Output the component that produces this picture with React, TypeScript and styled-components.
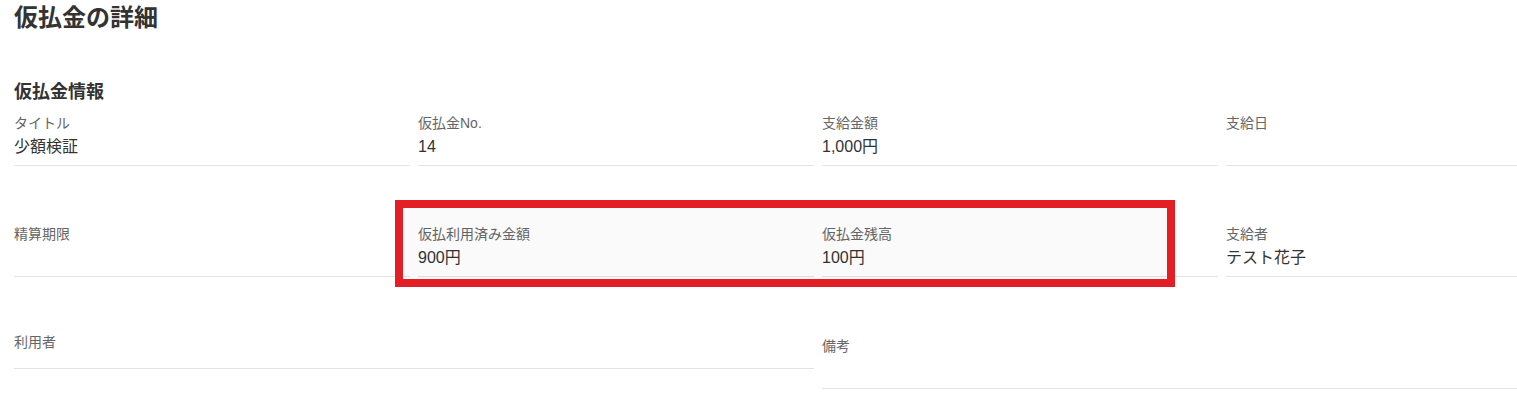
import styled, { createGlobalStyle } from 'styled-components';

const GlobalStyle = createGlobalStyle`
    html, body {
        margin: 0;
        padding: 0;
        background: #ffffff;
        overflow: hidden;
    }

    body {
        font-family: 'Liberation Sans', 'Noto Sans CJK JP', sans-serif;
        color: #333333;
    }
`;

const Page = styled.div`
    padding: 2px 0 0 14px;
`;

const PageTitle = styled.h1`
    margin: 0;
    font-size: 24px;
    line-height: 32px;
    font-weight: 700;
    color: #333333;
`;

const SectionTitle = styled.h2`
    margin: 46px 0 6px;
    font-size: 18px;
    line-height: 24px;
    font-weight: 700;
    color: #333333;
`;

// last column is cut off by the viewport in the screenshot, so let it fill what is left
const FieldGrid = styled.div`
    position: relative;
    display: grid;
    grid-template-columns: repeat(3, 396px) minmax(0, 1fr);
    column-gap: 8px;
    row-gap: 55px;
    align-items: start;
`;

const Field = styled.div<{ $span?: number; $top?: number }>`
    grid-column: span ${({ $span }) => $span ?? 1};
    display: flex;
    flex-direction: column;
    padding: ${({ $top }) => $top ?? 3}px 0 0;
    border-bottom: 1px solid #e3e3e3;
`;

const Label = styled.div`
    font-size: 14px;
    line-height: 20px;
    color: #666666;
`;

const Value = styled.div<{ $height?: number }>`
    margin-top: 2px;
    min-height: ${({ $height }) => $height ?? 24}px;
    padding-bottom: 6px;
    font-size: 16px;
    line-height: 24px;
    color: #333333;
`;

/* highlight frame drawn over the two balance fields */
const Highlight = styled.div`
    position: absolute;
    left: 381px;
    top: 90px;
    width: 780px;
    height: 87px;
    box-sizing: border-box;
    border: 8px solid #e41e25;
    background: rgba(0, 0, 0, 0.018);
    pointer-events: none;
`;

type FieldItem = {
    label: string;
    value?: string;
    span?: number;
    top?: number;
    height?: number;
};

const fields: FieldItem[] = [
    { label: 'タイトル', value: '少額検証' },
    { label: '仮払金No.', value: '14' },
    { label: '支給金額', value: '1,000円' },
    { label: '支給日' },
    { label: '精算期限' },
    { label: '仮払利用済み金額', value: '900円' },
    { label: '仮払金残高', value: '100円' },
    { label: '支給者', value: 'テスト花子' },
    { label: '利用者', span: 2, top: 0, height: 8 },
    { label: '備考', span: 2, top: 4, height: 24 },
];

export default function App() {
    return (
        <>
            <GlobalStyle />
            <Page>
                <PageTitle>仮払金の詳細</PageTitle>
                <SectionTitle>仮払金情報</SectionTitle>
                <FieldGrid>
                    {fields.map(({ label, value, span, top, height }) => (
                        <Field key={label} $span={span} $top={top}>
                            <Label>{label}</Label>
                            <Value $height={height}>{value}</Value>
                        </Field>
                    ))}
                    <Highlight />
                </FieldGrid>
            </Page>
        </>
    );
}
